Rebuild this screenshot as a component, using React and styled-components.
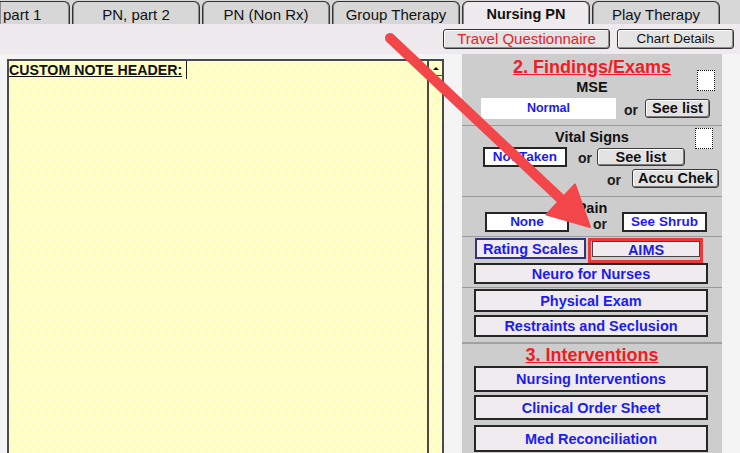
import React from "react";
import styled, { createGlobalStyle } from "styled-components";

const GlobalStyle = createGlobalStyle`
  html, body {
    margin: 0;
    padding: 0;
    background: #f4f4f4;
  }
  body {
    font-family: "Liberation Sans", Arial, sans-serif;
  }
`;

const BLUE = "#1c1cf0";
const RED = "#f01c24";

const Page = styled.div`
  position: relative;
  width: 740px;
  height: 453px;
  overflow: hidden;
  display: flex;
  flex-direction: column;
  background: #f4f4f4;
`;

const TabStrip = styled.div`
  display: flex;
  gap: 2px;
  height: 24px;
  flex-shrink: 0;
  box-sizing: border-box;
  padding-top: 1px;
  background: #d7d7d7;
`;

const Tab = styled.div`
  flex: 0 0 ${p => (p.$edge ? 70 : 128)}px;
  box-sizing: border-box;
  height: 23px;
  border: 1px solid #333;
  border-bottom: none;
  border-left: ${p => (p.$edge ? "none" : "1px solid #333")};
  border-radius: ${p => (p.$edge ? "0 6px 0 0" : "6px 6px 0 0")};
  box-shadow: inset 1px 0 0 #8a8a8a, inset -1px 0 0 #8a8a8a;
  background: ${p => (p.$active ? "#eeeaee" : "#d7d7d7")};
  color: #111;
  font-size: ${p => (p.$active ? "14.5px" : "15px")};
  font-weight: ${p => (p.$active ? 700 : 400)};
  display: flex;
  align-items: center;
  justify-content: ${p => (p.$edge ? "flex-start" : "center")};
  padding: 2px 0 0 ${p => (p.$edge ? 3 : 0)}px;
  white-space: nowrap;
`;

const Toolbar = styled.div`
  height: 30px;
  flex-shrink: 0;
  box-sizing: border-box;
  background: #eeeaee;
  display: flex;
  justify-content: flex-end;
  align-items: flex-end;
  gap: 7px;
  padding: 0 6px 5px 0;
`;

const ToolButton = styled.button`
  width: ${p => p.$w}px;
  height: 20px;
  box-sizing: border-box;
  padding: 0;
  border: 1px solid #333;
  border-radius: 3px;
  box-shadow: inset -1px -1px 0 #8a8a8a, inset 1px 1px 0 #fff;
  background: #e4e4e4;
  color: ${p => p.$color || "#111"};
  font-family: inherit;
  font-size: ${p => p.$size}px;
  line-height: 18px;
`;

const Body = styled.div`
  flex: 1;
  min-height: 0;
  display: flex;
`;

const Editor = styled.div`
  margin: 5px 0 0 7px;
  width: 437px;
  height: 400px;
  box-sizing: border-box;
  border: 2px solid #4a4a4a;
  border-bottom: none;
  display: flex;
  background-color: #fefec2;
  background-image:
    radial-gradient(circle, rgba(255, 255, 255, 0.75) 0.9px, transparent 1.3px),
    radial-gradient(circle, rgba(255, 255, 255, 0.75) 0.9px, transparent 1.3px);
  background-size: 8px 10px, 8px 10px;
  background-position: 0 0, 4px 5px;
`;

const NoteArea = styled.div`
  flex: 1;
  border-right: 2px solid #4a4a4a;
`;

const HeaderLabel = styled.div`
  display: inline-block;
  height: 18px;
  line-height: 19px;
  padding-right: 4px;
  border-right: 1px solid #222;
  color: #111;
  font-size: 14.2px;
  font-weight: 700;
  text-decoration: underline;
`;

const ScrollColumn = styled.div`
  width: 13px;
  display: flex;
  flex-direction: column;
`;

const ScrollUp = styled.div`
  height: 14px;
  border-bottom: 1px solid #4a4a4a;
  display: flex;
  align-items: center;
  justify-content: center;

  &::before {
    content: "";
    border-left: 3px solid transparent;
    border-right: 3px solid transparent;
    border-bottom: 3px solid #111;
  }
`;

const Panel = styled.div`
  margin-left: 18px;
  width: 260px;
  background: #cdcdcd;
  display: flex;
  flex-direction: column;
  align-items: flex-start;
`;

const HeadGrid = styled.div`
  align-self: stretch;
  display: grid;
  grid-template-columns: 1fr auto 1fr;
  grid-template-rows: ${p => p.$rows};
  row-gap: 2px;
  margin-top: ${p => p.$mt || 0}px;
`;

const Title = styled.div`
  grid-column: 2;
  align-self: ${p => (p.$center ? "center" : "auto")};
  margin-top: ${p => p.$mt || 0}px;
  color: ${RED};
  font-size: 18px;
  font-weight: 700;
  line-height: ${p => p.$lh || 20}px;
  text-decoration: underline;
  text-align: center;
  white-space: nowrap;
`;

const Label = styled.div`
  grid-column: 2;
  grid-row: ${p => p.$row || "auto"};
  align-self: start;
  margin-top: ${p => p.$mt || 0}px;
  color: #111;
  font-size: 14.5px;
  font-weight: 700;
  line-height: 16px;
  text-align: center;
  white-space: nowrap;
`;

const Check = styled.span`
  grid-column: 3;
  grid-row: ${p => p.$row};
  justify-self: end;
  align-self: ${p => p.$align};
  width: 18px;
  height: 21px;
  box-sizing: border-box;
  margin: 0 ${p => p.$mr}px ${p => p.$mb || 0}px 0;
  background: #fff;
  border: 1px dotted #111;
`;

const Row = styled.div`
  align-self: stretch;
  display: flex;
  align-items: ${p => p.$align || "center"};
  justify-content: ${p => p.$justify || "flex-start"};
  margin-top: ${p => p.$mt || 0}px;
  padding: 0 ${p => p.$pr || 0}px 0 ${p => p.$pl || 0}px;
`;

const Field = styled.div`
  width: ${p => p.$w}px;
  height: ${p => p.$h}px;
  box-sizing: border-box;
  background: #fff;
  border: ${p => (p.$plain ? "none" : "2px solid #262626")};
  color: ${BLUE};
  font-size: ${p => p.$size || 13.5}px;
  font-weight: 700;
  line-height: ${p => p.$h - (p.$plain ? 0 : 4)}px;
  text-align: center;
  white-space: nowrap;
`;

const Or = styled.span`
  margin: ${p => p.$m};
  padding-top: ${p => p.$pt || 0}px;
  align-self: ${p => p.$self || "auto"};
  color: #1a1a1a;
  font-size: 14px;
  font-weight: 700;
  line-height: 15px;
`;

const ListButton = styled.button`
  width: ${p => p.$w}px;
  height: ${p => p.$h}px;
  box-sizing: border-box;
  padding: 0;
  border: 1px solid #3c3c3c;
  border-radius: 3px;
  box-shadow: inset -1px -1px 0 #7a7a7a, inset 1px 1px 0 #fff;
  background: #e3e3e3;
  color: #111;
  font-family: inherit;
  font-size: 14.5px;
  font-weight: 700;
  line-height: 15px;
`;

const Separator = styled.div`
  align-self: stretch;
  flex-shrink: 0;
  height: ${p => (p.$thick ? 2 : 1)}px;
  margin-top: ${p => p.$mt || 0}px;
  background: ${p => (p.$thick ? "#a0a0a0" : "#9a9a9a")};
`;

const NavButton = styled.button`
  width: ${p => p.$w || 234}px;
  height: ${p => p.$h}px;
  box-sizing: border-box;
  margin: ${p => p.$mt || 0}px 0 0 ${p => (p.$ml === undefined ? 12 : p.$ml)}px;
  padding: 0;
  border: ${p => p.$bw || 2}px solid ${p => p.$border || "#262626"};
  background: #efebef;
  color: ${BLUE};
  font-family: inherit;
  font-size: 14.5px;
  font-weight: 700;
  white-space: nowrap;
`;

const Highlight = styled.div`
  margin-left: 2px;
  width: 115px;
  height: 25px;
  box-sizing: border-box;
  border: 3px solid #e83a3c;
  display: flex;
  align-items: flex-start;
  padding-left: 1px;
`;

const ArrowLayer = styled.svg`
  position: absolute;
  top: 0;
  left: 0;
  width: 740px;
  height: 453px;
  pointer-events: none;
`;

const tabs = [
  { label: "part 1", edge: true },
  { label: "PN, part 2" },
  { label: "PN (Non Rx)" },
  { label: "Group Therapy" },
  { label: "Nursing PN", active: true },
  { label: "Play Therapy" },
];

const Arrow = () => (
  <ArrowLayer viewBox="0 0 740 453">
    <line x1="390" y1="38" x2="562" y2="200" stroke="#f2464a" strokeWidth="10" strokeLinecap="round" />
    <polygon points="590,227 546.5,214.5 575,184.5" fill="#f2464a" stroke="#f2464a" strokeWidth="2" strokeLinejoin="round" />
  </ArrowLayer>
);

export default function App() {
  return (
    <Page>
      <GlobalStyle />
      <TabStrip>
        {tabs.map(t => (
          <Tab key={t.label} $active={t.active} $edge={t.edge}>{t.label}</Tab>
        ))}
      </TabStrip>
      <Toolbar>
        <ToolButton $w={167} $size={15} $color="#e8202a">Travel Questionnaire</ToolButton>
        <ToolButton $w={117} $size={13.5}>Chart Details</ToolButton>
      </Toolbar>
      <Body>
        <Editor>
          <NoteArea>
            <HeaderLabel>CUSTOM NOTE HEADER:</HeaderLabel>
          </NoteArea>
          <ScrollColumn>
            <ScrollUp />
          </ScrollColumn>
        </Editor>

        <Panel>
          <HeadGrid $rows="20px 16px" $mt={3}>
            <Title>2. Findings/Exams</Title>
            <Label $row="2">MSE</Label>
            <Check $row="1 / 3" $align="end" $mr={7} $mb={4} />
          </HeadGrid>
          <Row $mt={3} $pl={19}>
            <Field $w={135} $h={21} $plain $size={12.5}>Normal</Field>
            <Or $m="0 7px 0 8px" $pt={4}>or</Or>
            <ListButton $w={65} $h={19}>See list</ListButton>
          </Row>
          <Separator $mt={6} />

          <HeadGrid $rows="19px" $mt={2}>
            <Label $row="1" $mt={1}>Vital Signs</Label>
            <Check $row="1" $align="start" $mr={9} />
          </HeadGrid>
          <Row $pl={21}>
            <Field $w={84} $h={20}>Not Taken</Field>
            <Or $m="0 5px 0 11px" $pt={2}>or</Or>
            <ListButton $w={88} $h={18}>See list</ListButton>
          </Row>
          <Row $mt={2} $justify="flex-end" $pr={3}>
            <Or $m="0 11px 0 0" $pt={3}>or</Or>
            <ListButton $w={87} $h={19}>Accu Chek</ListButton>
          </Row>
          <Separator $mt={8} />

          <HeadGrid $rows="16px" $mt={3}>
            <Label $row="1">Pain</Label>
          </HeadGrid>
          <Row $mt={-4} $pl={23}>
            <Field $w={84} $h={20}>None</Field>
            <Or $m="0 15px 0 24px" $self="flex-end">or</Or>
            <Field $w={85} $h={20}>See Shrub</Field>
          </Row>
          <Separator $mt={4} />

          <Row $mt={1} $pl={13} $align="flex-start">
            <NavButton $w={111} $h={21} $ml={0} $border="#34347e">Rating Scales</NavButton>
            <Highlight>
              <NavButton $w={108} $h={16} $ml={0} $bw={1} $border="#444">AIMS</NavButton>
            </Highlight>
          </Row>
          <NavButton $h={21}>Neuro for Nurses</NavButton>
          <Separator $mt={3} />
          <NavButton $h={23} $mt={1}>Physical Exam</NavButton>
          <NavButton $h={22} $mt={3}>Restraints and Seclusion</NavButton>
          <Separator $thick $mt={5} />

          <HeadGrid $rows="18px" $mt={2}>
            <Title $lh={18}>3. Interventions</Title>
          </HeadGrid>
          <NavButton $h={26} $mt={2}>Nursing Interventions</NavButton>
          <NavButton $h={25} $mt={3}>Clinical Order Sheet</NavButton>
          <NavButton $h={27} $mt={5}>Med Reconciliation</NavButton>
        </Panel>
      </Body>
      <Arrow />
    </Page>
  );
}
